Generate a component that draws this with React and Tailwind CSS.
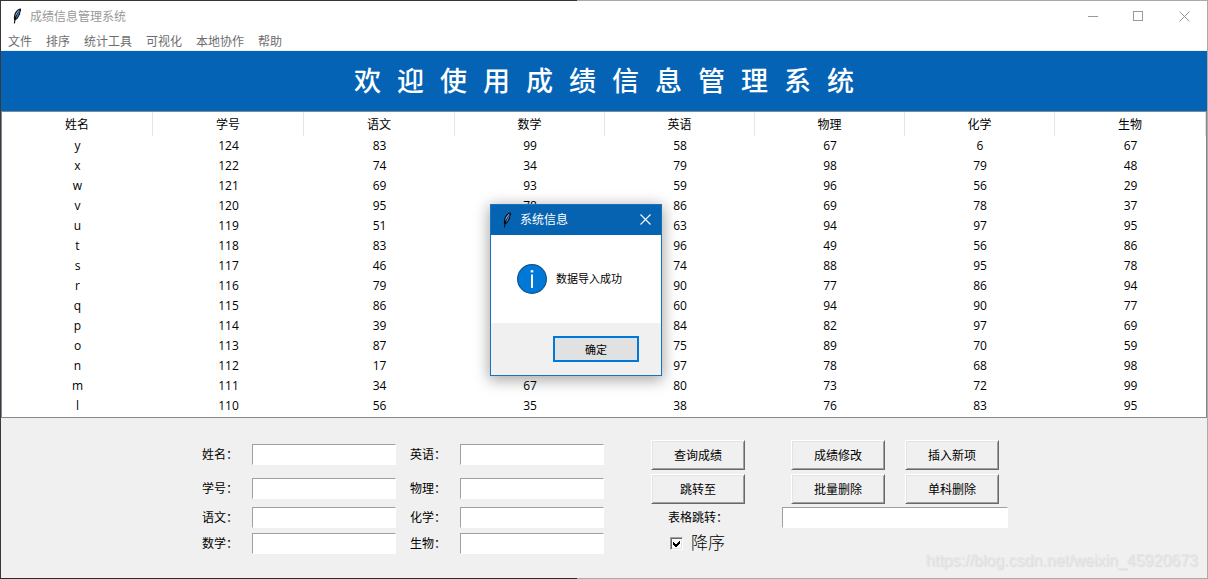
import React, { useState } from 'react';

const columns = ['姓名', '学号', '语文', '数学', '英语', '物理', '化学', '生物'];

const scores = [
  ['y', 124, 83, 99, 58, 67, 6, 67],
  ['x', 122, 74, 34, 79, 98, 79, 48],
  ['w', 121, 69, 93, 59, 96, 56, 29],
  ['v', 120, 95, 78, 86, 69, 78, 37],
  ['u', 119, 51, '', 63, 94, 97, 95],
  ['t', 118, 83, '', 96, 49, 56, 86],
  ['s', 117, 46, '', 74, 88, 95, 78],
  ['r', 116, 79, '', 90, 77, 86, 94],
  ['q', 115, 86, '', 60, 94, 90, 77],
  ['p', 114, 39, '', 84, 82, 97, 69],
  ['o', 113, 87, '', 75, 89, 70, 59],
  ['n', 112, 17, '', 97, 78, 68, 98],
  ['m', 111, 34, 67, 80, 73, 72, 99],
  ['l', 110, 56, 35, 38, 76, 83, 95]
];

const gridCols = 'grid grid-cols-[151px_151px_151px_150px_150px_150px_150px_151px]';

const Feather = ({ className }) => (
  <svg className={className} width="10" height="16" viewBox="0 0 10 16">
    <path d="M8.8 0.5C6.6 0.6 4.4 2.4 3.2 4.6C2.2 6.6 1.6 9 2 11.4L3 12.4C5 11.6 6.6 9.8 7.3 7.6L8.2 6.2L8.1 4.8C9 3.4 9.3 1.6 8.8 0.5Z" fill="#0b0b12" />
    <path d="M8 1.4C6 2.2 4.4 4.2 3.6 6.4L3 9.2L5.4 5.2Z" fill="#8fbcf0" />
    <path d="M7.9 2.4L5.6 6L3.8 10.4C5.4 9.4 6.2 8 6.6 6.4L7.3 5Z" fill="#4f87cc" />
    <path d="M3.1 10.5L2.4 15.5" fill="none" stroke="#0b0b12" strokeWidth="1.1" />
  </svg>
);

const Entry = ({ className }) => (
  <input
    type="text"
    className={`h-[21px] border border-t-[#a0a0a0] border-l-[#a0a0a0] border-r-white border-b-white bg-white px-1 outline-none ${className}`}
  />
);

const TkButton = ({ children }) => (
  <button className="h-[30px] w-[94px] border border-t-white border-l-white border-r-[#696969] border-b-[#696969] bg-[#f0f0f0] pt-px shadow-[inset_1px_1px_0_#e3e3e3,inset_-1px_-1px_0_#a0a0a0]">
    {children}
  </button>
);

const Field = ({ label }) => (
  <label className="flex h-[21px] items-center">
    <span className="w-[50px] whitespace-nowrap pt-px">{label}：</span>
    <Entry className="w-[144px]" />
  </label>
);

const TitleBar = () => (
  <div className="flex h-[30px] shrink-0 items-center bg-white pl-[11px] pr-[17px]">
    <Feather />
    <span className="ml-[8px] pt-px text-[#999]">成绩信息管理系统</span>
    <svg className="mb-px ml-auto" width="102" height="12" viewBox="0 0 102 12" fill="none" stroke="#999" shapeRendering="crispEdges">
      <path d="M0 6.5H10" />
      <rect x="45.5" y="1.5" width="9" height="9" />
      <path d="M91.5 1.5L101.5 11.5M101.5 1.5L91.5 11.5" shapeRendering="auto" />
    </svg>
  </div>
);

const MenuBar = () => (
  <div className="flex h-[20px] shrink-0 items-center gap-[14px] border-b border-[#f0f0f0] bg-white pl-[7px] pt-[2px] text-[#6d6d6d]">
    {['文件', '排序', '统计工具', '可视化', '本地协作', '帮助'].map(item => (
      <span key={item}>{item}</span>
    ))}
  </div>
);

const ScoreTable = () => (
  <div className="h-[307px] shrink-0 border border-[#828790] bg-white text-black">
    <div className={`${gridCols} h-[24px]`}>
      {columns.map(name => (
        <div key={name} className="flex items-center justify-center border-r border-[#e5e5e5] pt-px">{name}</div>
      ))}
    </div>
    {scores.map(row => (
      <div key={row[0]} className={`${gridCols} h-[20px]`}>
        {row.map((value, i) => (
          <div key={i} className="text-center leading-[20px]">{value}</div>
        ))}
      </div>
    ))}
  </div>
);

const Controls = () => {
  const [descending, setDescending] = useState(true);

  return (
    <div className="flex h-[160px] items-start bg-[#f0f0f0] pl-[201px] pt-[22px] text-black">
      <div className="grid grid-cols-[194px_194px] grid-rows-[34px_29px_26px_21px] gap-x-[14px] pt-[4px]">
        <Field label="姓名" />
        <Field label="英语" />
        <Field label="学号" />
        <Field label="物理" />
        <Field label="语文" />
        <Field label="化学" />
        <Field label="数学" />
        <Field label="生物" />
      </div>

      <div className="ml-[47px] flex flex-col">
        <div className="grid grid-cols-[140px_114px_94px] gap-y-1">
          <TkButton>查询成绩</TkButton>
          <TkButton>成绩修改</TkButton>
          <TkButton>插入新项</TkButton>
          <TkButton>跳转至</TkButton>
          <TkButton>批量删除</TkButton>
          <TkButton>单科删除</TkButton>
        </div>
        <div className="mt-[3px] flex h-[21px] items-center">
          <span className="w-[131px] pl-[17px] pt-px">表格跳转：</span>
          <Entry className="w-[226px]" />
        </div>
        <label className="mt-[3px] flex h-[24px] items-center pl-[19px]">
          <input type="checkbox" className="sr-only" checked={descending} onChange={() => setDescending(!descending)} />
          <span className="flex h-[13px] w-[13px] items-center justify-center border border-t-[#a0a0a0] border-l-[#a0a0a0] border-r-white border-b-white bg-white shadow-[inset_1px_1px_0_#696969,inset_-1px_-1px_0_#e3e3e3]">
            {descending && (
              <svg width="7" height="7" viewBox="0 0 7 7" shapeRendering="crispEdges">
                <path d="M0 2V5L2 7H3L7 3V0L3 4H2Z" fill="#000" />
              </svg>
            )}
          </span>
          <span className="ml-[8px] pb-px text-[17px] font-light">降序</span>
        </label>
      </div>
    </div>
  );
};

const MessageBox = ({ onClose }) => (
  <div className="absolute left-[490px] top-[204px] flex h-[172px] w-[172px] flex-col border border-[#1873bc] bg-white text-black shadow-[0_3px_14px_1px_rgba(0,0,0,0.36)]">
    <div className="flex h-[30px] shrink-0 items-center bg-[#0563b1] pb-px pl-[11px] pr-[10px] text-white">
      <Feather />
      <span className="ml-[8px] pt-px">系统信息</span>
      <button className="ml-auto" onClick={onClose}>
        <svg width="11" height="11" viewBox="0 0 11 11" stroke="#fff" strokeWidth="1.1">
          <path d="M0.5 0.5L10.5 10.5M10.5 0.5L0.5 10.5" />
        </svg>
      </button>
    </div>
    <div className="flex flex-1 items-center pl-[26px] text-[11px]">
      <svg width="30" height="30" viewBox="0 0 30 30">
        <circle cx="15" cy="15" r="14.4" fill="#0078d7" stroke="#0e5794" strokeWidth="1.2" />
        <path d="M14 10.5H16V24H14Z" fill="#fff" />
        <path d="M13.7 6.2H16.3V8.4H13.7Z" fill="#fff" />
      </svg>
      <span className="ml-[9px] pb-px">数据导入成功</span>
    </div>
    <div className="flex h-[52px] shrink-0 justify-end bg-[#f0f0f0] pr-[22px] pt-[13px]">
      <button className="h-[26px] w-[86px] border-2 border-[#0078d7] bg-[#e1e1e1] text-[11px]" onClick={onClose}>
        确定
      </button>
    </div>
  </div>
);

const App = () => {
  const [showMessage, setShowMessage] = useState(true);

  return (
    <div className="relative flex h-[579px] w-[1208px] flex-col overflow-hidden bg-[#f0f0f0] font-['Open_Sans','Noto_Sans_CJK_SC',sans-serif] text-[12px] leading-none">
      {/* window frame */}
      <div className="flex h-px shrink-0">
        <div className="w-[577px] bg-[#343434]" />
        <div className="flex-1 bg-[#a9a9a9]" />
      </div>
      <div className="flex h-[577px] shrink-0 flex-col border-l border-r border-l-[#3a3a3e] border-r-[#aaa]">
        <TitleBar />
        <MenuBar />
        <div className="flex h-[60px] shrink-0 items-center justify-center bg-[#0563b5]">
          <h1 className="whitespace-nowrap pt-[2px] font-['Liberation_Serif','Noto_Sans_CJK_SC',serif] text-[27px] font-medium text-white [word-spacing:9.25px]">
            欢 迎 使 用 成 绩 信 息 管 理 系 统
          </h1>
        </div>
        <ScoreTable />
        <Controls />
      </div>
      <div className="flex h-px shrink-0">
        <div className="w-[577px] bg-[#2b2b2b]" />
        <div className="flex-1 bg-[#aaa]" />
      </div>

      <span className="absolute bottom-[9px] right-[10px] font-['Liberation_Sans',sans-serif] text-[16px] leading-[18px] text-[#e6e6e6] [text-shadow:1px_1px_1px_#dadada]">
        https://blog.csdn.net/weixin_45920673
      </span>

      {showMessage && <MessageBox onClose={() => setShowMessage(false)} />}
    </div>
  );
};

export default App;
